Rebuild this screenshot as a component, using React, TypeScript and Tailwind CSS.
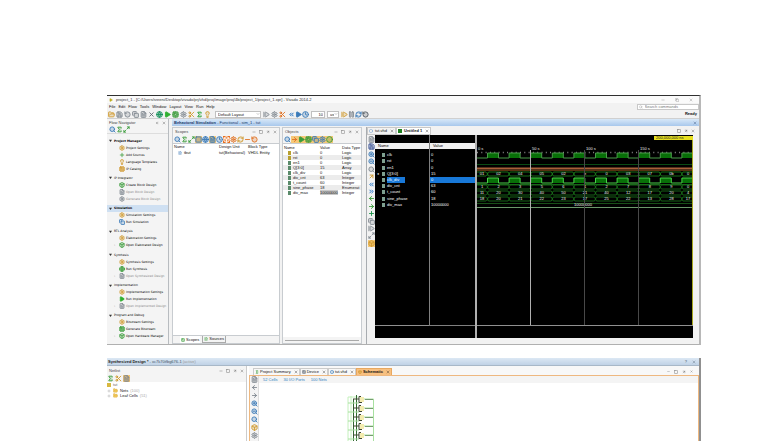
import type { ReactNode } from 'react';
import {
  ArrowLeft,
  ArrowRight,
  ArrowUpRight,
  Box,
  ChevronDown,
  ChevronsLeft,
  ChevronsRight,
  Circle,
  Clock,
  Copy,
  Cpu,
  FileText,
  FolderOpen,
  Globe,
  Lightbulb,
  Maximize2,
  Minus,
  Pause,
  Play,
  Plus,
  RefreshCw,
  RotateCcw,
  Save,
  Scissors,
  Search,
  Settings,
  Sigma,
  Square,
  StepForward,
  X,
  ZoomIn,
  ZoomOut,
  type LucideIcon,
} from 'lucide-react';
import { clsx } from 'clsx';

type Tool = { icon: LucideIcon; color: string; label: string; on?: boolean };

const blue = 'text-[#3a7ab8]';
const green = 'text-[#3a9c3a]';
const gray = 'text-[#808890]';
const gold = 'text-[#d09a30]';
const orange = 'text-[#e07020]';

const fileTools: Tool[] = [
  { icon: FolderOpen, color: gold, label: 'Open' },
  { icon: Save, color: gray, label: 'Save' },
  { icon: RotateCcw, color: gray, label: 'Undo' },
  { icon: Copy, color: gray, label: 'Copy' },
  { icon: FileText, color: gray, label: 'Paste' },
  { icon: X, color: 'text-[#606870]', label: 'Delete' },
  { icon: Globe, color: 'text-[#16905a]', label: 'Run synthesis' },
  { icon: Play, color: 'text-[#30b030]', label: 'Run implementation' },
  { icon: Cpu, color: green, label: 'Generate bitstream' },
  { icon: Settings, color: gray, label: 'Settings' },
  { icon: Scissors, color: gold, label: 'Cut' },
  { icon: Sigma, color: 'text-[#20a030]', label: 'Project summary' },
  { icon: Lightbulb, color: gold, label: 'Tips' },
];

const layoutTools: Tool[] = [
  { icon: StepForward, color: gray, label: 'Step' },
  { icon: Settings, color: gray, label: 'Options' },
  { icon: Scissors, color: orange, label: 'Break' },
];

const runTools: Tool[] = [
  { icon: ChevronsLeft, color: 'text-[#2070c0]', label: 'Restart' },
  { icon: Play, color: blue, label: 'Run all' },
  { icon: Clock, color: blue, label: 'Run for time' },
];

const stepTools: Tool[] = [
  { icon: StepForward, color: gold, label: 'Step over' },
  { icon: Pause, color: gray, label: 'Pause' },
  { icon: RefreshCw, color: blue, label: 'Relaunch' },
  { icon: RotateCcw, color: 'text-[#505860]', label: 'Reset' },
];

const scopeTools: Tool[] = [
  { icon: Search, color: blue, label: 'Find' },
  { icon: Sigma, color: green, label: 'Collapse all' },
  { icon: Maximize2, color: green, label: 'Expand all' },
  { icon: Square, color: blue, label: 'Show modules', on: true },
  { icon: Globe, color: blue, label: 'Show instances' },
  { icon: FileText, color: blue, label: 'Show blocks', on: true },
  { icon: Clock, color: blue, label: 'Show processes' },
  { icon: Box, color: 'bg-[#e87020] text-white', label: 'Show functions' },
  { icon: Settings, color: orange, label: 'Show tasks' },
  { icon: RefreshCw, color: gold, label: 'Show generates' },
  { icon: Minus, color: orange, label: 'Show packages' },
  { icon: RotateCcw, color: orange, label: 'Show all' },
];

const objectTools: Tool[] = [
  { icon: Search, color: blue, label: 'Find' },
  { icon: ArrowRight, color: orange, label: 'Inputs', on: true },
  { icon: Play, color: green, label: 'Outputs', on: true },
  { icon: Cpu, color: green, label: 'Internal', on: true },
  { icon: Copy, color: blue, label: 'Constants', on: true },
  { icon: Settings, color: blue, label: 'Generics', on: true },
  { icon: Circle, color: green, label: 'Variables', on: true },
];

const waveTools: Tool[] = [
  { icon: FileText, color: gray, label: 'New' },
  { icon: Save, color: 'text-[#405898]', label: 'Save waveform' },
  { icon: ZoomIn, color: blue, label: 'Zoom in' },
  { icon: ZoomOut, color: blue, label: 'Zoom out' },
  { icon: Search, color: gray, label: 'Zoom fit' },
  { icon: ArrowUpRight, color: gold, label: 'Go to cursor' },
  { icon: ChevronsLeft, color: 'text-[#2878c8]', label: 'Go to start' },
  { icon: ChevronsRight, color: 'text-[#2878c8]', label: 'Go to end' },
  { icon: ArrowLeft, color: green, label: 'Previous edge' },
  { icon: ArrowRight, color: green, label: 'Next edge' },
  { icon: Plus, color: 'text-[#189048]', label: 'Add marker' },
  { icon: Copy, color: gray, label: 'Swap markers' },
  { icon: StepForward, color: gray, label: 'Next marker' },
  { icon: Maximize2, color: gray, label: 'Snap' },
  { icon: Box, color: gold, label: 'Float ruler', on: true },
];

const schematicTools: Tool[] = [
  { icon: FileText, color: gray, label: 'Properties' },
  { icon: ArrowLeft, color: gray, label: 'Back' },
  { icon: ArrowRight, color: gray, label: 'Forward' },
  { icon: ZoomIn, color: blue, label: 'Zoom in' },
  { icon: ZoomOut, color: blue, label: 'Zoom out' },
  { icon: Search, color: blue, label: 'Zoom fit' },
  { icon: Box, color: gold, label: 'Select area' },
  { icon: Settings, color: gray, label: 'Auto-fit' },
];

type Step = { label: string; icon: LucideIcon; color: string; dim?: boolean; open?: boolean };

const flow: { title: string; steps: Step[] }[] = [
  {
    title: 'Project Manager',
    steps: [
      { label: 'Project Settings', icon: Settings, color: gold },
      { label: 'Add Sources', icon: Plus, color: green },
      { label: 'Language Templates', icon: Lightbulb, color: gold },
      { label: 'IP Catalog', icon: Cpu, color: gold },
    ],
  },
  {
    title: 'IP Integrator',
    steps: [
      { label: 'Create Block Design', icon: Box, color: green },
      { label: 'Open Block Design', icon: FileText, color: gray, dim: true },
      { label: 'Generate Block Design', icon: Settings, color: gray, dim: true },
    ],
  },
  {
    title: 'Simulation',
    steps: [
      { label: 'Simulation Settings', icon: Settings, color: gold },
      { label: 'Run Simulation', icon: Copy, color: blue },
    ],
  },
  {
    title: 'RTL Analysis',
    steps: [
      { label: 'Elaboration Settings', icon: Settings, color: gold },
      { label: 'Open Elaborated Design', icon: Box, color: green, open: true },
    ],
  },
  {
    title: 'Synthesis',
    steps: [
      { label: 'Synthesis Settings', icon: Settings, color: gold },
      { label: 'Run Synthesis', icon: Globe, color: green },
      { label: 'Open Synthesized Design', icon: FileText, color: gray, dim: true, open: true },
    ],
  },
  {
    title: 'Implementation',
    steps: [
      { label: 'Implementation Settings', icon: Settings, color: gold },
      { label: 'Run Implementation', icon: Play, color: 'text-[#30b030]' },
      { label: 'Open Implemented Design', icon: FileText, color: gray, dim: true, open: true },
    ],
  },
  {
    title: 'Program and Debug',
    steps: [
      { label: 'Bitstream Settings', icon: Settings, color: gold },
      { label: 'Generate Bitstream', icon: Cpu, color: green },
      { label: 'Open Hardware Manager', icon: Box, color: green, open: true },
    ],
  },
];

const objects = [
  ['clk', '0', 'Logic'],
  ['rst', '0', 'Logic'],
  ['en1', '0', 'Logic'],
  ['Q[3:0]', '15', 'Array'],
  ['clk_div', '0', 'Logic'],
  ['div_cnt', '63', 'Integer'],
  ['t_count', '60', 'Integer'],
  ['sine_phase', '18', 'Enumerat'],
  ['div_max', '10000000', 'Integer'],
];

const signals = [
  ['clk', '0'],
  ['rst', '0'],
  ['en1', '0'],
  ['Q[3:0]', '15'],
  ['clk_div', '0'],
  ['div_cnt', '63'],
  ['t_count', '60'],
  ['sine_phase', '18'],
  ['div_max', '10000000'],
];

const menus = ['File', 'Edit', 'Flow', 'Tools', 'Window', 'Layout', 'View', 'Run', 'Help'];

function Glyph({ icon: Icon, className }: { icon: LucideIcon; className: string }) {
  return <Icon className={clsx('shrink-0', className)} strokeWidth={3} fill="currentColor" fillOpacity={Icon === Play ? 1 : 0.25} />;
}

function Tools({ items, className }: { items: Tool[]; className?: string }) {
  return (
    <div className={clsx('flex items-center', className)}>
      {items.map(({ icon, color, label, on }) => (
        <button key={label} type="button" aria-label={label} className={clsx('shrink-0', on && 'bg-[#f5c878]')}>
          <Glyph icon={icon} className={clsx('size-[7px]', color)} />
        </button>
      ))}
    </div>
  );
}

function Picker({ label, value, className }: { label: string; value: string; className: string }) {
  return (
    <div className={clsx('flex h-[7px] items-center border border-[#c0c0c0] bg-white', className)}>
      <select aria-label={label} className="h-[5px] min-w-0 flex-1 appearance-none pl-[2px] leading-[5px]">
        <option>{value}</option>
      </select>
      <ChevronDown className="size-[4px] shrink-0 text-[#555]" />
    </div>
  );
}

function PanelHead({ title, children }: { title: string; children?: ReactNode }) {
  return (
    <div className="flex h-[7px] items-center justify-between px-[2px] text-[#444]">
      <span>{title}</span>
      <div className="flex items-center gap-[3px]">
        {children ?? (
          <>
            <Minus className="size-[4px]" />
            <Square className="size-[4px]" />
            <ArrowUpRight className="size-[4px]" />
            <X className="size-[4px]" />
          </>
        )}
      </div>
    </div>
  );
}

function FlowNavigator() {
  return (
    <nav className="flex w-[62px] shrink-0 flex-col border-r border-[#b8bcc0] bg-[#f4f4f4]">
      <PanelHead title="Flow Navigator">
        <ChevronsLeft className="size-[4px]" />
        <X className="size-[4px]" />
      </PanelHead>
      <Tools items={scopeTools.slice(0, 3)} className="h-[8px] border-b border-[#ddd] px-[2px]" />
      <div className="flex flex-1 flex-col justify-between pt-[3px] pb-[4px] font-['DejaVu_Sans',sans-serif] text-[3px]">
        {flow.map((group) => (
          <div key={group.title}>
            <button
              type="button"
              className={clsx(
                'flex h-[7px] w-full items-center gap-[2px] pl-[2px] text-black',
                group.title === 'Simulation' && 'bg-[#cfe0f2]',
                (group.title === 'Simulation' || group.title === 'Project Manager') && 'font-bold'
              )}
            >
              <svg viewBox="0 0 4 4" className="size-[3px]">
                <path d="M0 1h4L2 4z" fill="#333" />
              </svg>
              {group.title}
            </button>
            {group.steps.map(({ label, icon, color, dim, open }) => (
              <button
                key={label}
                type="button"
                className={clsx('flex h-[7px] w-full items-center pl-[7px]', dim ? 'text-[#888]' : 'text-black')}
              >
                <span className="w-[5px] shrink-0 text-left text-[#888]">{open && '›'}</span>
                <Glyph icon={icon} className={clsx('mr-[1px] size-[6px]', color)} />
                {label}
              </button>
            ))}
          </div>
        ))}
      </div>
    </nav>
  );
}

function Scopes() {
  return (
    <section className="flex w-[108px] shrink-0 flex-col border border-[#c8ccd0] bg-[#f4f4f4]">
      <PanelHead title="Scopes" />
      <Tools items={scopeTools} className="h-[8px] px-[1px]" />
      <div className="flex-1 border-y border-[#c8ccd0] bg-white">
        <table className="w-full table-fixed text-left">
          <thead>
            <tr className="h-[6px]">
              <th className="w-[46px] p-0 pl-[1px] font-normal">Name</th>
              <th className="w-[29px] p-0 font-normal">Design Unit</th>
              <th className="p-0 font-normal">Block Type</th>
            </tr>
          </thead>
          <tbody>
            <tr className="h-[6px]">
              <td className="p-0 pl-[5px]">
                <span className="flex items-center gap-[2px]">
                  <FileText className="size-[4px] text-[#3a7ab8]" />
                  tbut
                </span>
              </td>
              <td className="p-0">tut(Behavioral)</td>
              <td className="p-0">VHDL Entity</td>
            </tr>
          </tbody>
        </table>
      </div>
      <div className="flex h-[7px] gap-[2px] pl-[7px]" role="tablist">
        <button type="button" role="tab" aria-selected className="flex items-center gap-[1px] bg-white px-[1px]">
          <Cpu className="size-[4px] text-[#3a9c3a]" />
          Scopes
        </button>
        <button type="button" role="tab" className="flex items-center gap-[1px] border border-t-0 border-[#aaa] px-[1px]">
          <FileText className="size-[4px] text-[#3a9c3a]" />
          Sources
        </button>
      </div>
    </section>
  );
}

function Objects() {
  return (
    <section className="flex w-[80px] shrink-0 flex-col border border-[#c8ccd0] bg-[#f4f4f4]">
      <PanelHead title="Objects" />
      <Tools items={objectTools} className="h-[8px] px-[1px]" />
      <div className="flex-1 overflow-hidden border-t border-[#c8ccd0] bg-white">
        <table className="w-full table-fixed text-left leading-[5px] whitespace-nowrap">
          <thead>
            <tr className="h-[6px]">
              <th className="w-[37px] p-0 pl-[1px] font-normal">Name</th>
              <th className="w-[22px] p-0 font-normal">Value</th>
              <th className="p-0 font-normal">Data Type</th>
            </tr>
          </thead>
          <tbody>
            {objects.map(([name, value, type], i) => (
              <tr key={name} className={clsx('h-[5px]', i % 2 === 1 && 'bg-[#ececec]')}>
                <td className="p-0 pl-[5px]">
                  <span className="flex items-center gap-[2px]">
                    <span className={clsx('h-[4px] w-[3px]', i < 2 ? 'bg-[#b8a030]' : 'bg-[#5a8a6a]')} />
                    {name}
                  </span>
                </td>
                <td className="p-0">
                  <span className={clsx(i === 8 && 'bg-[#c8c8c8]')}>{value}</span>
                </td>
                <td className="p-0">{type}</td>
              </tr>
            ))}
          </tbody>
        </table>
      </div>
      <div className="flex h-[6px] items-center px-[2px]">
        <div className="h-[1px] w-full bg-[#aaa]" />
      </div>
    </section>
  );
}

const PERIOD = 21.6;
const cycles = Array.from({ length: 10 }, (_, i) => 10.5 + i * PERIOD);

// square wave that rises at each cycle start and falls 11 later
function clockPath(high: number, low: number) {
  return `M0 ${low}` + cycles.map((x) => `H${x}V${high}H${x + 11}V${low}`).join('') + 'H216';
}

function Clk({ high, low, line }: { high: number; low: number; line: string }) {
  return (
    <g>
      {cycles.map((x) => (
        <rect key={x} x={x} y={high} width="11" height={low - high} fill="#087008" />
      ))}
      <path d={clockPath(high, low)} fill="none" stroke={line} />
    </g>
  );
}

function Bus({ y, labels, color }: { y: number; labels: string[]; color: string }) {
  return (
    <g>
      <path
        d={
          `M0 ${y - 2}H9M0 ${y + 2}H9` +
          cycles
            .map((x) => `M${x - 1} ${y - 2}L${x + 1} ${y + 2}H${x + PERIOD - 1}M${x - 1} ${y + 2}L${x + 1} ${y - 2}H${x + PERIOD - 1}`)
            .join('')
        }
        fill="none"
        stroke={color}
        strokeWidth="0.8"
      />
      {labels.map((label, i) => (
        <text key={i} x={i === 0 ? 5 : Math.min(i * PERIOD, 211)} y={y + 1} fill="#e8f4e8" textAnchor="middle">
          {label}
        </text>
      ))}
    </g>
  );
}

function Waves() {
  return (
    <svg className="h-full w-full" fontSize="4">
      <path d="M0 17.500H216" stroke="#888" strokeWidth="1.500" strokeDasharray="1 3.300" />
      {['0 s', '50 s', '100 s', '150 s'].map((t, i) => (
        <text key={t} x={i * 54 + 1} y="15" fill="#eee">
          {t}
        </text>
      ))}
      <Clk high={18} low={23} line="#4a9a4a" />
      <path d="M0 29.500H216" stroke="#0a4a14" />
      <path d="M0 33.500H216" stroke="#a86038" strokeWidth="2" />
      <path d="M0 35.500H216" stroke="#583010" />
      <Bus y={39} labels={['01', '02', '04', '05', '02', 'e', '0', '03', '07', '0b', '0']} color="#1c8a1c" />
      <Clk high={43} low={48} line="#48d048" />
      <path d="M0 49.500H216" stroke="#186018" />
      <Bus y={52} labels={['1', '2', '3', '5', '6', '1', '2', '7', '8', '9', '0']} color="#1c7a1c" />
      <Bus y={58} labels={['11', '20', '30', '40', '50', '21', '40', '12', '17', '20', '4']} color="#1c7a1c" />
      <Bus y={64} labels={['18', '20', '21', '22', '23', '17', '25', '22', '13', '28', '17']} color="#1c7a1c" />
      <path d="M0 68.500H216" stroke="#185018" />
      <path d="M0 72.500H216" stroke="#6a9a6a" />
      <text x="106" y="71" fill="#eee" textAnchor="middle">
        10000000
      </text>
      <path d="M53.500 15V190" stroke="#b0b0b0" />
      <path d="M107.500 15V190M161.500 15V190" stroke="#484848" />
      <path d="M215.500 1V190" stroke="#a8a820" />
      <path d="M0 190.500H216" stroke="#909090" />
      <rect x="177" y="1" width="39" height="4" fill="#e8e020" />
      <text x="179" y="4" fill="#222">
        200,000,000 ns
      </text>
    </svg>
  );
}

function WavePanel() {
  return (
    <section className="flex min-w-0 flex-1 flex-col border-l border-[#a8acb0] bg-[#f2f2f2]">
      <div className="flex h-[8px] items-center justify-between pr-[4px]">
        <div className="flex items-center" role="tablist">
          <button type="button" role="tab" className="flex items-center gap-[2px] border border-[#c8c8c8] px-[1px]">
            <Circle className="size-[4px] text-[#3a7ab8]" />
            tut.vhd
            <X className="ml-[1px] size-[4px]" />
          </button>
          <button
            type="button"
            role="tab"
            aria-selected
            className="flex items-center gap-[2px] border border-[#c8c8c8] bg-white px-[1px] font-bold"
          >
            <span className="size-[4px] bg-[#208020]" />
            Untitled 1
            <X className="ml-[1px] size-[4px]" />
          </button>
        </div>
        <div className="flex items-center gap-[3px] text-[#444]">
          <Square className="size-[4px]" />
          <ArrowUpRight className="size-[4px]" />
          <X className="size-[4px]" />
        </div>
      </div>
      <div className="flex min-h-0 flex-1 pr-[6px] pb-[6px]">
        <Tools items={waveTools} className="h-[112px] w-[8px] flex-col justify-between pt-[1px]" />
        <div className="flex min-w-0 flex-1 bg-black text-white">
          <div className="mb-[12px] w-[54px] shrink-0 border-b border-[#909090]">
            <div className="mt-[8px] h-[6px] bg-[#f0f0f0] pl-[3px] text-black">Name</div>
            <ul className="mt-[3px] flex h-[56px] flex-col">
              {signals.map(([name], i) => (
                <li key={name} className="flex flex-1 items-center gap-[2px] pl-[2px]">
                  <span className="w-[3px] text-[#ccc]">{i === 3 && '●'}</span>
                  <span className="h-[4px] w-[3px] bg-[#7ea090]" />
                  <span className={clsx(i === 4 && 'w-[18px] bg-[#1878d8]')}>{name}</span>
                </li>
              ))}
            </ul>
          </div>
          <div className="mb-[12px] w-[46px] shrink-0 border-b border-l border-[#808080]">
            <div className="mt-[8px] h-[6px] bg-[#f0f0f0] pl-[3px] text-black">Value</div>
            <ul className="mt-[3px] flex h-[56px] flex-col">
              {signals.map(([name, value], i) => (
                <li key={name} className={clsx('flex flex-1 items-center pl-[1px]', i === 4 && 'bg-[#1878d8]')}>
                  {value}
                </li>
              ))}
            </ul>
          </div>
          <div className="min-w-0 flex-1 border-l-2 border-[#b0b0b0]">
            <Waves />
          </div>
        </div>
      </div>
    </section>
  );
}

function Simulator() {
  return (
    <div className="flex h-[250px] shrink-0 flex-col border-t border-r-2 border-b border-t-[#303030] border-r-[#b8b8b8] border-b-[#b0b0b0] bg-[#f2f2f2]">
      <header className="flex h-[7px] items-center justify-between bg-[#fafafa] pr-[6px] pl-[2px] text-[#333]">
        <div className="flex items-center gap-[3px]">
          <Play className="size-[4px] fill-[#c0b020] text-[#c0b020]" />
          <h1>project_1 - [C:/Users/sreeni/Desktop/vivado/prj/vhd/proj/image/proj/4b/project_1/project_1.xpr] - Vivado 2014.2</h1>
        </div>
        <div className="flex gap-[10px] text-[#777]">
          <Minus className="size-[4px]" />
          <Copy className="size-[4px]" />
          <X className="size-[4px]" />
        </div>
      </header>
      <div className="flex h-[7px] items-center justify-between pl-[2px]">
        <div className="flex gap-[3px]">
          {menus.map((m) => (
            <button key={m} type="button">
              {m}
            </button>
          ))}
        </div>
        <label className="flex h-[6px] w-[62px] items-center gap-[2px] border border-[#c8c8c8] bg-white px-[1px]">
          <Search className="size-[4px] text-[#888]" />
          <input aria-label="Search commands" placeholder="Search commands" className="h-[4px] w-full min-w-0 leading-[4px] placeholder:text-[#777]" />
        </label>
      </div>
      <div className="flex h-[9px] items-center gap-[2px] border-b border-[#d0d0d0] pr-[2px] pl-[1px]">
        <Tools items={fileTools} className="gap-[1px]" />
        <Picker label="Layout" value="Default Layout" className="ml-[2px] w-[46px]" />
        <Tools items={layoutTools} className="gap-[1px]" />
        <Tools items={runTools} />
        <input aria-label="Run time" defaultValue="10" className="h-[7px] w-[14px] border border-[#c0c0c0] bg-white px-[1px] text-right leading-[5px]" />
        <Picker label="Time unit" value="us" className="w-[12px]" />
        <Tools items={stepTools} />
        <span className="ml-auto font-bold">Ready</span>
      </div>
      <div className="flex min-h-0 flex-1">
        <FlowNavigator />
        <div className="flex min-w-0 flex-1 flex-col pl-[3px]">
          <div className="flex h-[7px] items-center justify-between bg-linear-to-b from-[#d8e8f8] to-[#a8c8ec] px-[2px] text-[#1a3a6a]">
            <h2>
              <b>Behavioral Simulation</b> - Functional - sim_1 - tut
            </h2>
            <X className="size-[4px]" />
          </div>
          <div className="flex min-h-0 flex-1 gap-[2px] pt-[1px]">
            <Scopes />
            <Objects />
            <div className="flex min-w-0 flex-1 pl-[2px]">
              <WavePanel />
            </div>
          </div>
        </div>
      </div>
    </div>
  );
}

const gates = [1, 10, 19, 28, 37, 46, 55];

function Schematic() {
  return (
    <svg className="ml-[88px] h-[64px] w-[30px]" viewBox="0 0 30 64" fill="none">
      <path d="M1 2H11M1 2V64M4 64V1" stroke="#c4f0bc" />
      <path d="M6.500 4V64M9.500 0V64" stroke="#306830" />
      {gates.map((y) => (
        <g key={y}>
          <path d={`M1 ${y + 7}H12M17 ${y + 3}H26.500V${y + 12}`} stroke="#a8e0a0" />
          <path d={`M6 ${y + 3}H12V${y + 0.5}H14M12 ${y + 3}V${y + 6.5}H15`} stroke="#404830" />
          <path d={`M18 ${y + 3.5}H26`} stroke="#507848" strokeWidth="0.7" />
          <rect x="13" y={y + 1} width="4" height="5" fill="#f4ecb0" />
        </g>
      ))}
    </svg>
  );
}

const docTabs = [
  { label: 'Project Summary', icon: Sigma, color: green },
  { label: 'Device', icon: Cpu, color: gray },
  { label: 'tut.vhd', icon: Circle, color: blue },
  { label: 'Schematic', icon: Box, color: gold },
];

function SynthesizedDesign() {
  return (
    <div className="flex min-h-[83px] flex-1 flex-col border-r-2 border-[#909090] bg-white">
      <header className="flex h-[8px] shrink-0 items-center justify-between border-b border-[#a8b8c8] bg-linear-to-b from-[#dce8f4] to-[#c0d2e6] pr-[3px] pl-[1px] text-[#456]">
        <h2>
          <b className="text-[#222]">Synthesized Design *</b> - xc7k70tfbg676-1 <span className="text-[#999]">(active)</span>
        </h2>
        <div className="flex items-center gap-[5px]">
          <span>?</span>
          <X className="size-[4px]" />
        </div>
      </header>
      <div className="flex min-h-0 flex-1 gap-[2px]">
        <aside className="w-[140px] shrink-0 border-r border-[#ccc]">
          <div className="bg-[#f4f4f4] pt-[1px]">
            <PanelHead title="Netlist" />
            <Tools
              items={[
                { icon: Sigma, color: green, label: 'Collapse all' },
                { icon: Scissors, color: gold, label: 'Cross probe' },
                { icon: FileText, color: gray, label: 'Filter', on: true },
              ]}
              className="h-[8px] gap-[1px]"
            />
          </div>
          <ul>
            <li className="flex h-[6px] items-center gap-[2px]">
              <span className="size-[4px] bg-[#d8b840]" />
              <span className="text-[#666]">tut</span>
            </li>
            {[
              ['Nets', '(100)'],
              ['Leaf Cells', '(51)'],
            ].map(([name, count]) => (
              <li key={name} className="flex h-[5px] items-center gap-[2px]">
                <Plus className="size-[4px] text-[#888]" />
                <FolderOpen className="size-[5px] fill-[#f4cc60] text-[#d8a830]" />
                {name} <span className="text-[#aaa]">{count}</span>
              </li>
            ))}
          </ul>
        </aside>
        <div className="flex min-w-0 flex-1 flex-col">
          <div className="flex h-[9px] shrink-0 items-end justify-between bg-[#f8f8f8] pr-[6px] pl-[4px]">
            <div className="flex" role="tablist">
              {docTabs.map(({ label, icon, color }) => (
                <button
                  key={label}
                  type="button"
                  role="tab"
                  aria-selected={label === 'Schematic'}
                  className={clsx(
                    'flex h-[7px] items-center gap-[1px] border border-b-0 px-[1px]',
                    label === 'Schematic' ? 'border-[#e8a860] bg-[#f8c080] font-bold' : 'border-[#ccc]'
                  )}
                >
                  <Glyph icon={icon} className={clsx('size-[4px]', color)} />
                  {label}
                  <X className="ml-[2px] size-[4px]" />
                </button>
              ))}
            </div>
            <div className="flex h-[7px] items-center gap-[4px] text-[#444]">
              <Minus className="size-[3px]" />
              <Square className="size-[4px]" />
              <ArrowUpRight className="size-[4px]" />
              <X className="size-[3px]" />
            </div>
          </div>
          <div className="flex min-h-0 flex-1 border-t border-r border-l border-[#eeb880]">
            <Tools items={schematicTools} className="w-[9px] flex-col gap-[1px] border-r border-[#ddd] bg-[#f4f4f4]" />
            <div className="min-w-0 flex-1 overflow-hidden">
              <div className="flex h-[7px] items-center gap-[6px] bg-[#f4f4f4] pl-[4px]">
                {['52 Cells', '30 I/O Ports', '100 Nets'].map((t) => (
                  <a key={t} href="#" className="text-[#3080c0]">
                    {t}
                  </a>
                ))}
              </div>
              <div className="pt-[12px]">
                <Schematic />
              </div>
            </div>
          </div>
        </div>
      </div>
    </div>
  );
}

export default function App() {
  return (
    <main className="flex h-screen flex-col gap-[13px] overflow-hidden bg-white pt-[95px] pr-[83px] pl-[107px] font-['Liberation_Sans',sans-serif] text-[4px] leading-[6px] whitespace-nowrap text-[#111]">
      <Simulator />
      <SynthesizedDesign />
    </main>
  );
}
